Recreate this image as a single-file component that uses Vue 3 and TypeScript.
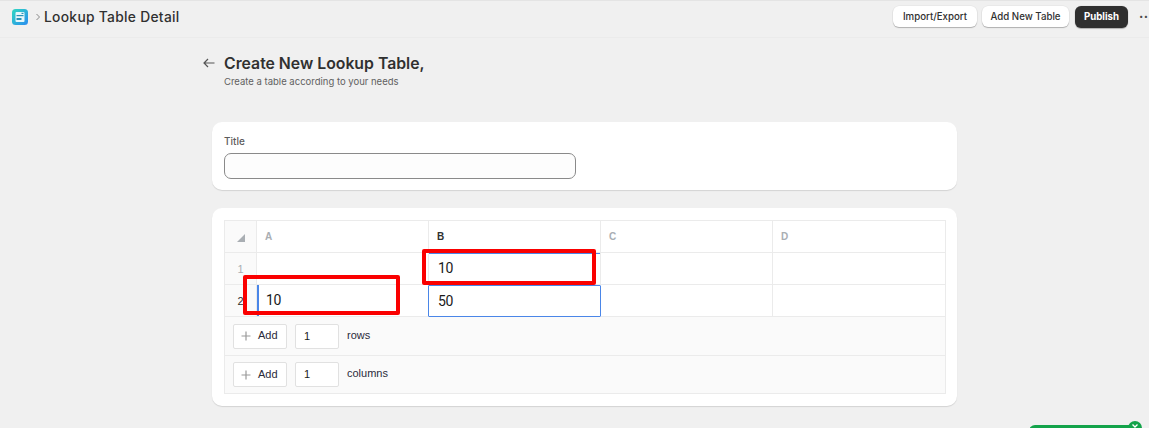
<script setup lang="ts">
const cols: string[] = ['A', 'B', 'C', 'D']
const rows = [
  { n: '1', cells: ['', '10', '', ''] },
  { n: '2', cells: ['10', '50', '', ''] },
]
const adders = [
  { label: 'rows' },
  { label: 'columns' },
]
</script>

<template>
  <div class="page">
    <header class="topbar">
      <div class="crumbs">
        <svg class="logo" width="16" height="16" viewBox="0 0 16 16">
          <defs>
            <linearGradient id="lg" x1="0" y1="0" x2="1" y2="1">
              <stop offset="0" stop-color="#2fd8c0" />
              <stop offset="1" stop-color="#2a8cf0" />
            </linearGradient>
          </defs>
          <rect width="16" height="16" rx="3.5" fill="url(#lg)" />
          <rect x="3.5" y="3" width="9" height="10" rx="1" fill="#e6f7fb" />
          <rect x="4.5" y="6" width="7" height="1.2" fill="#2a93b8" />
          <rect x="4.5" y="9" width="5" height="2" fill="#2a93b8" />
          <rect x="9.5" y="3.8" width="2" height="1.2" fill="#2a93b8" />
        </svg>
        <svg class="chev" width="6" height="8" viewBox="0 0 6 8"><path d="M1.5 1l3 3-3 3" fill="none" stroke="#8a8a8a" stroke-width="1" /></svg>
        <span class="crumb-title">Lookup Table Detail</span>
      </div>
      <div class="actions">
        <button class="btn">Import/Export</button>
        <button class="btn">Add New Table</button>
        <button class="btn primary">Publish</button>
        <span class="more">··</span>
      </div>
    </header>

    <main class="content">
      <div class="heading">
        <svg class="back" width="12" height="10" viewBox="0 0 12 10"><path d="M11.5 5H1M5 1 1 5l4 4" fill="none" stroke="#555" stroke-width="1.2" /></svg>
        <div>
          <h1>Create New Lookup Table,</h1>
          <p>Create a table according to your needs</p>
        </div>
      </div>

      <section class="card title-card">
        <label class="field-label">Title</label>
        <div class="title-input"></div>
      </section>

      <section class="card table-card">
        <div class="sheet">
          <div class="grid">
            <div class="cell corner"><span class="tri"></span></div>
            <div v-for="c in cols" :key="c" class="cell head" :class="{ active: c === 'B' }">{{ c }}</div>
            <template v-for="(r, ri) in rows" :key="r.n">
              <div class="cell rownum" :class="{ dark: ri === 1 }">{{ r.n }}</div>
              <div
                v-for="(v, ci) in r.cells"
                :key="ci"
                class="cell val"
                :class="{ sel: ri === 1 && ci === 1, leftbar: ri === 1 && ci === 0, topbar2: ri === 0 && ci === 1 }"
              >{{ v }}</div>
            </template>
          </div>
          <div v-for="a in adders" :key="a.label" class="adder">
            <button class="add-btn">
              <svg width="10" height="10" viewBox="0 0 10 10"><path d="M5 0.5v9M0.5 5h9" stroke="#9a9a9a" stroke-width="1.2" /></svg>
              <span class="add-text">Add</span>
            </button>
            <div class="count">1</div>
            <span class="adder-label">{{ a.label }}</span>
          </div>
        </div>
        <div class="mark mark-b"></div>
        <div class="mark mark-a"></div>
      </section>
    </main>

    <div class="toast"></div>
    <div class="toast-dot">
      <svg width="8" height="8" viewBox="0 0 8 8"><path d="M1.5 1.5l5 5M6.5 1.5l-5 5" stroke="#fff" stroke-width="1.4" /></svg>
    </div>
  </div>
</template>

<style>
html, body { margin: 0; background: #f0f0f0; overflow: hidden; }
</style>

<style scoped>
.page {
  position: relative;
  width: 1149px;
  height: 428px;
  overflow: hidden;
  background: #f0f0f0;
  font-family: Inter, "Liberation Sans", sans-serif;
  color: #303030;
  box-sizing: border-box;
  border-top: 1px solid #e4e4e4;
}
.topbar {
  height: 37px;
  box-sizing: border-box;
  border-bottom: 1px solid #ebebeb;
  display: flex;
  align-items: center;
  justify-content: space-between;
  padding: 0 3px 5px 12px;
}
.crumbs { display: flex; align-items: center; }
.logo { display: block; }
.chev { margin-left: 7px; }
.crumb-title { margin-left: 3px; font-size: 13.8px; font-weight: 500; color: #303030; letter-spacing: 0.3px; }
.actions { display: flex; align-items: center; gap: 5px; }
.btn {
  height: 21px;
  padding: 0;
  border: none;
  border-radius: 6px;
  background: #fff;
  box-shadow: 0 1px 1px rgba(0, 0, 0, 0.25), 0 0 0 0.5px rgba(0, 0, 0, 0.06);
  font-family: Inter, "Liberation Sans", sans-serif;
  font-size: 9.7px;
  font-weight: 500;
  color: #303030;
  width: 84px;
}
.btn:nth-child(2) { width: 87px; }
.btn.primary {
  width: 53px;
  height: 22px;
  background: #2f2f2f;
  color: #fff;
  font-weight: 700;
  margin-left: 1px;
}
.more { margin-left: 6px; width: 7px; font-size: 13px; font-weight: 700; color: #4a4a4a; line-height: 1; letter-spacing: 0.5px; }
.content { display: flex; flex-direction: column; padding-left: 203px; }
.heading { display: flex; align-items: flex-start; height: 84px; padding-top: 17px; box-sizing: border-box; }
.back { margin-top: 3px; margin-right: 9px; }
h1 { margin: 0; font-size: 15.8px; line-height: 18px; font-weight: 600; color: #303030; }
p { margin: 3px 0 0; font-size: 9.5px; line-height: 12px; color: #616161; }
.card {
  width: 745px;
  margin-left: 9px;
  background: #fff;
  border-radius: 10px;
  box-shadow: 0 1px 1px rgba(0, 0, 0, 0.12);
  box-sizing: border-box;
}
.title-card { height: 68px; padding: 13px 12px 0; }
.field-label { display: block; font-size: 10px; line-height: 12px; font-weight: 500; color: #5c5c5c; }
.title-input {
  width: 352px;
  height: 26px;
  margin-top: 6px;
  box-sizing: border-box;
  border: 1px solid #8a8a8a;
  border-radius: 7px;
  background: #fdfdfd;
}
.table-card { position: relative; margin-top: 18px; height: 198px; padding: 12px; }
.sheet { border: 1px solid #ebebeb; width: 722px; box-sizing: border-box; }
.grid {
  display: grid;
  grid-template-columns: 32px 172px 172px 172px 1fr;
  grid-auto-rows: 32px;
}
.cell {
  box-sizing: border-box;
  border-right: 1px solid #ebebeb;
  border-bottom: 1px solid #ebebeb;
  display: flex;
  align-items: center;
  font-family: "Liberation Sans", Arial, sans-serif;
}
.cell:nth-child(5n) { border-right: none; }
.corner { justify-content: center; background: #fafafa; }
.tri {
  width: 0;
  height: 0;
  border-left: 8px solid transparent;
  border-bottom: 8px solid #a9aeb3;
  margin-top: 2px;
}
.head { padding-left: 8px; font-size: 10px; font-weight: 700; color: #a9aeb3; }
.head.active { color: #303030; }
.rownum { justify-content: center; font-size: 11px; color: #a9aeb3; background: #fafafa; }
.rownum.dark { color: #303030; }
.val { padding: 0 0 1px 9px; font-family: Roboto, "Liberation Sans", sans-serif; font-size: 14px; letter-spacing: -0.3px; color: #1a1a1a; }
.sel { border: 1px solid #4a86e8; margin-left: -1px; padding-left: 9px; border-radius: 1px; }
.leftbar { box-shadow: inset 2px 0 0 #4a86e8; }
.topbar2 { box-shadow: inset 0 1px 0 #4a86e8; }
.adder {
  height: 39px;
  box-sizing: border-box;
  display: flex;
  align-items: center;
  padding-left: 8px;
  background: #fafafa;
  border-bottom: 1px solid #ebebeb;
}
.adder:last-child { border-bottom: none; height: 37px; }
.add-btn {
  width: 54px;
  height: 25px;
  display: flex;
  align-items: center;
  padding: 0 0 0 7px;
  gap: 7px;
  box-sizing: border-box;
  border: 1px solid #e1e1e1;
  border-radius: 2px;
  background: #fff;
  font-family: "Liberation Sans", Arial, sans-serif;
  font-size: 11px;
  color: #2a2a3a;
}
.add-text { padding-bottom: 2px; }
.count {
  margin-left: 8px;
  width: 44px;
  height: 25px;
  box-sizing: border-box;
  border: 1px solid #e1e1e1;
  border-radius: 2px;
  background: #fff;
  padding: 0 0 1px 8px;
  display: flex;
  align-items: center;
  font-family: "Liberation Sans", Arial, sans-serif;
  font-size: 11px;
  color: #1a1a1a;
}
.adder-label { margin-left: 8px; font-family: "Liberation Sans", Arial, sans-serif; font-size: 11px; color: #2a2a3a; padding-bottom: 3px; }
.mark { position: absolute; box-sizing: border-box; border: 4px solid #fa0000; border-radius: 2px; }
.mark-b { left: 210px; top: 41px; width: 174px; height: 36px; }
.mark-a { left: 31px; top: 67px; width: 157px; height: 40px; }
.toast { position: absolute; left: 1029px; top: 424px; width: 106px; height: 20px; background: #13a34a; border-radius: 6px 6px 0 0; }
.toast-dot {
  position: absolute;
  left: 1128px;
  top: 420px;
  width: 14px;
  height: 14px;
  border-radius: 50%;
  background: #13a34a;
  display: flex;
  align-items: center;
  justify-content: center;
}
.toast-dot svg { margin-top: -3px; }
</style>
